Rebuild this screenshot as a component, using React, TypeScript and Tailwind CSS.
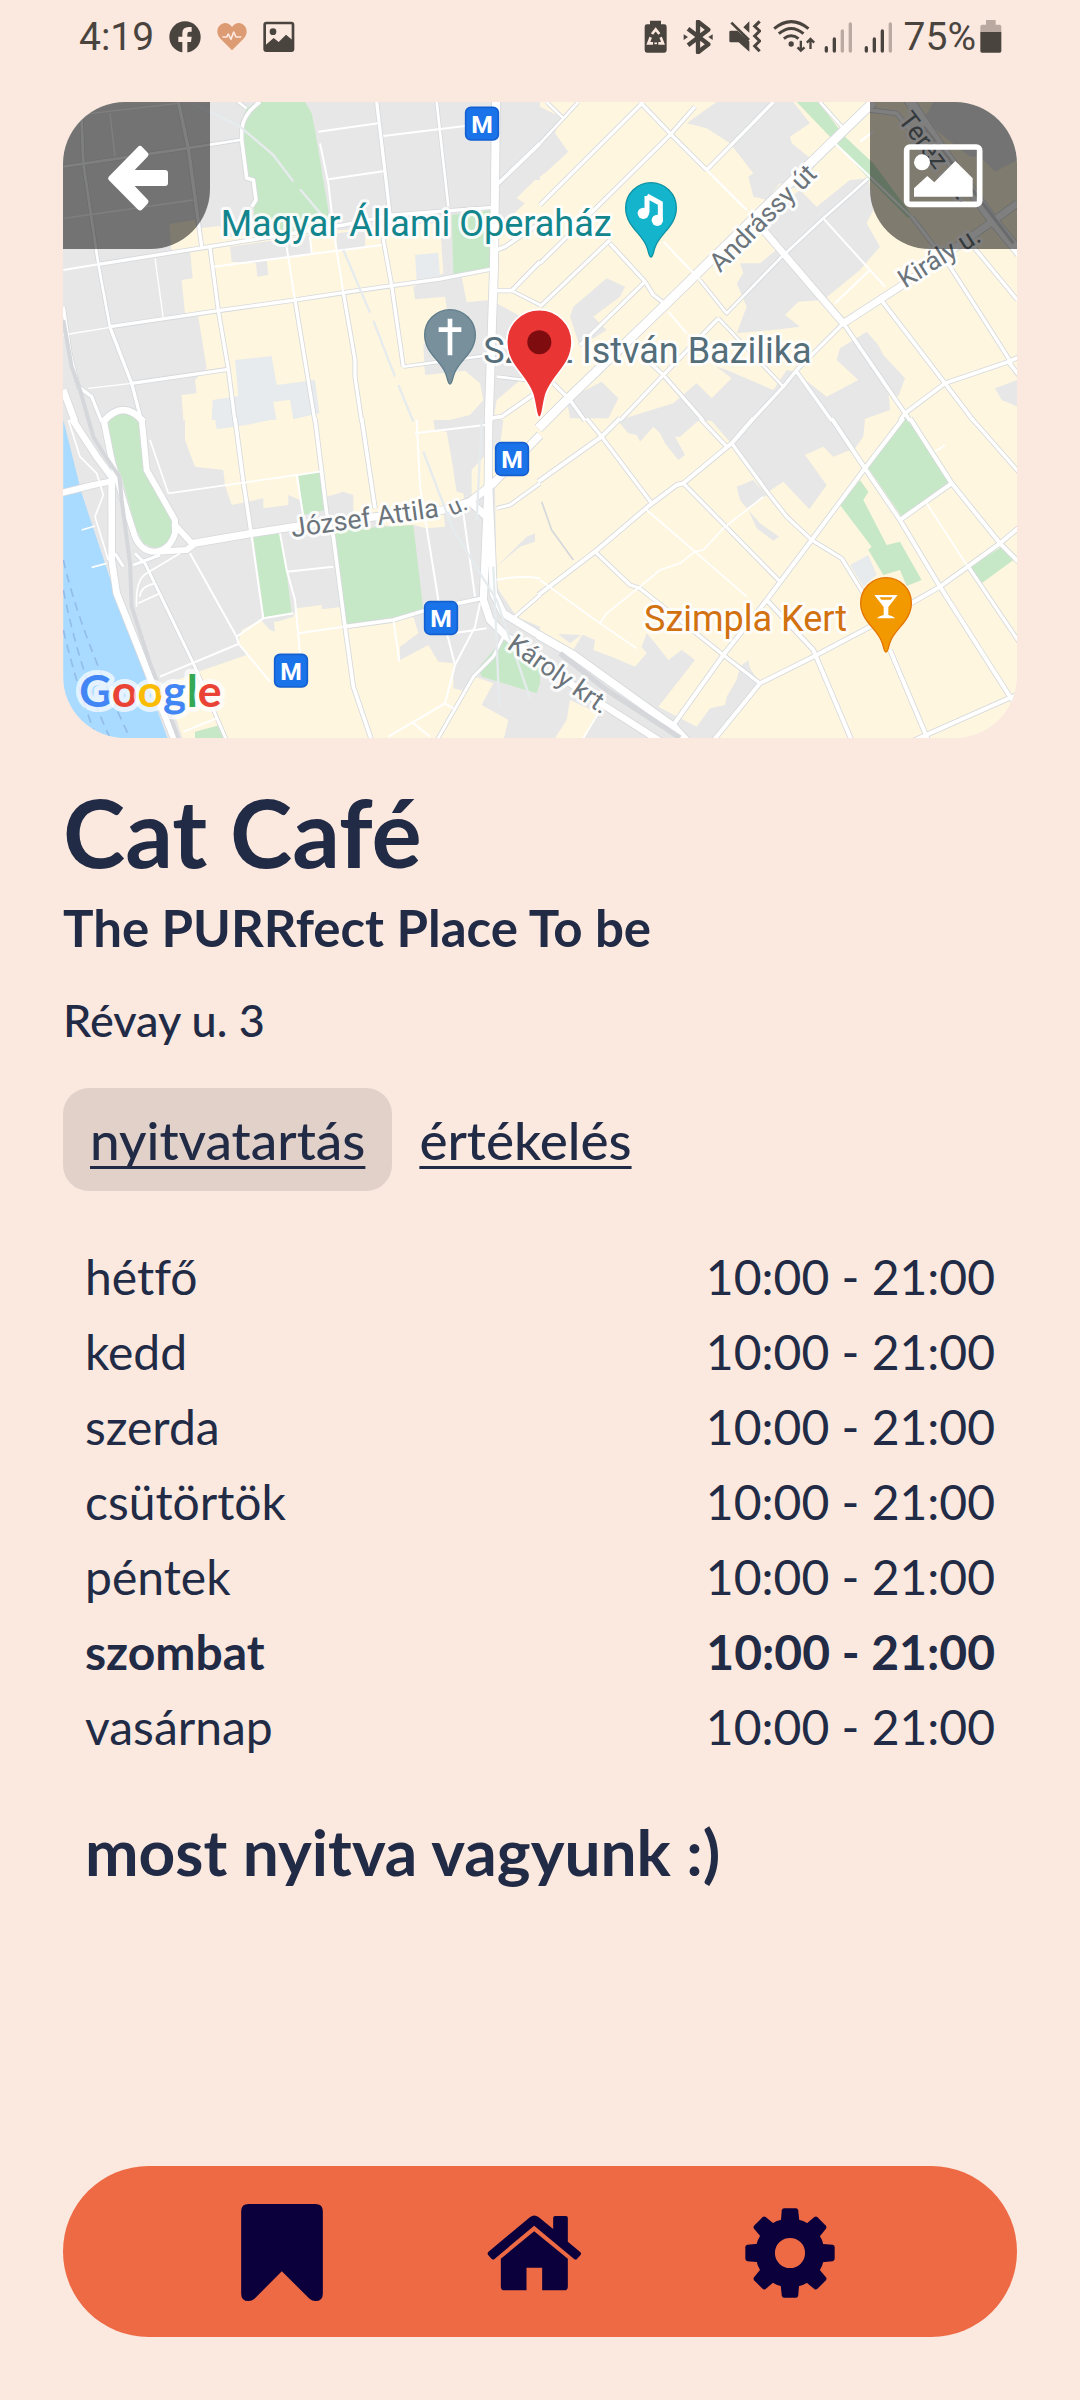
import type { ReactNode } from "react";

type Road = [width: number, d: string];

const GREY = "#e7e7e7";
const YELLOW = "#fef6df";
const GREEN = "#c7e8c7";
const PALE = "#e8ebed";

type Area = [fill: string, points: string];

type Quadrant = { x: number; y: number; areas: Area[]; roads: Road[] };

const quadrants: Quadrant[] = [
  {
    x: 0,
    y: 0,
    areas: [
      [GREY, "0,0 1440,0 1440,240 1425,240 1370,295 1395,310 1320,380 1310,450 1310,610 1440,680 1440,790 1310,900 1300,962 0,962"],
      [YELLOW, "328,372 405,360 415,385 480,378 490,410 850,390 960,380 1115,370 1140,370 1150,520 1060,560 1065,598 1155,590 1165,655 1090,735 1095,825 1215,812 1260,850 1270,900 1230,945 1160,962 370,962 365,885 410,880 405,840 440,805 415,650 375,640 365,540 398,535 390,450 335,455"],
      [GREY, "510,440 750,405 755,460 620,480 625,525 592,530 588,490 515,485"],
      [GREY, "830,400 915,390 915,440 830,455"],
      [YELLOW, "1205,530 1290,515 1290,600 1220,607"],
      [PALE, "1065,465 1135,458 1140,530 1070,540"],
      [PALE, "525,780 635,768 650,855 765,840 778,940 700,958 690,900 640,905 650,962 455,962 458,900 535,888"],
      [GREEN, "545,60 560,25 590,6 735,6 755,40 765,90 805,330 810,400 690,405 590,390 580,320 588,300 580,240 560,235 545,120"],
      [GREEN, "1175,345 1295,330 1290,505 1180,522"],
      [GREEN, "145,962 165,942 195,938 225,950 235,962"],
    ],
    roads: [
      [4, "M10,50 L355,10 M150,40 L165,170 M10,355 L400,300 M285,475 L310,655 M10,705 L150,682 M85,865 L215,850"],
      [6, "M775,95 L955,70 M970,108 L1215,78 M805,238 L975,213 M780,130 L805,250 L825,420 L850,578 M680,440 L705,600 M460,500 L965,435 M750,410 L755,460 M10,510 L115,493"],
      [8, "M65,60 L70,190 L115,493 L150,682 M10,200 L380,145 L540,120 M1130,6 L1165,320"],
      [8, "M535,6 L560,25 M1355,572 L1440,615 M1310,830 L1440,845 M1030,800 L1290,765"],
      [10, "M115,493 L430,443 L650,408 L850,375 L1000,345 L1300,322 M150,680 L475,632 L705,600 L850,578 L995,557 L1140,537 L1290,508 M215,850 L505,808"],
      [10, "M355,6 L385,145 L425,440 M450,443 L475,632 L505,808 L525,965 M150,682 L215,850 L245,965"],
      [10, "M950,6 L975,215 L990,345 L970,420 L995,557 L1030,800 M705,600 L765,965 M850,578 L885,780 L885,830 L905,965"],
      [11, "M600,6 Q550,40 545,90 L545,120 L560,235 L580,240 L588,300 L575,320"],
      [11, "M1440,130 L1310,255 M1440,370 L1335,440 L1310,450 M1440,485 L1355,572 L1310,572 M1440,870 L1325,950 L1290,955"],
      [10, "M10,620 L30,760 L55,860 L95,890 L125,965"],
      [20, "M10,870 L45,965 M130,965 Q190,895 250,965"],
      [24, "M1308,6 L1302,500 L1286,965"],
    ],
  },
  {
    x: 1440,
    y: 0,
    areas: [
      [GREY, "0,20 60,50 45,100 85,155 20,215 0,230"],
      [GREY, "440,70 530,6 760,6 810,70 750,110 755,130 830,190 780,270 720,250 680,300 640,290 625,230 640,220 570,130 500,85"],
      [GREY, "700,330 780,270 830,320 930,240 985,235 1000,330 980,370 1020,440 960,510 850,600 775,605 735,645 780,680 700,690 590,700 620,620 590,550 610,520 600,490 660,490 720,440 660,380"],
      [GREY, "980,695 1015,735 1030,765 1095,835 1075,890 1045,870 1050,930 960,962 230,962 400,910 470,850 515,895 575,835 530,800 560,810 700,870 740,810 765,815 860,890 955,840 890,780 900,745"],
      [GREY, "100,620 200,535 255,560 240,590 160,650 200,690 120,740 90,650"],
      [GREY, "185,845 235,895 205,955 90,955 80,900"],
      [GREY, "1180,6 1432,6 1432,180 1365,215 1320,170 1290,170 1150,60"],
      [GREY, "1365,865 1432,840 1432,920 1385,900"],
      [GREEN, "770,6 835,6 915,110 1000,190 1115,345 1105,355 985,235 870,110"],
    ],
    roads: [
      [6, "M500,210 L620,330 M850,355 L1035,560 M885,610 L990,510 M885,130 L1115,350 M385,635 L440,700 M960,125 L1000,95 M370,425 L480,540"],
      [8, "M20,6 L70,55 L115,6 M70,55 L0,130 M840,6 L910,85 M480,540 L560,640 L720,475 L850,355 L935,280 L985,235 M535,655 L730,860"],
      [10, "M310,6 L0,315 M465,20 L390,105 L0,490 M210,420 L0,620 M210,430 L315,545 L340,585 L380,615 M315,545 L120,735"],
      [10, "M300,6 L390,100 L500,210 M500,210 L700,6 M535,655 L370,825 L240,962 M40,850 L90,900 L135,962 M310,770 L370,825 L490,962"],
      [10, "M910,670 L770,810 L730,860 L635,962 M770,815 L875,962 M1115,350 L1230,500 L1320,640 L1415,790 M1300,440 L1432,600"],
      [11, "M1020,595 L1215,850 L1300,962 M1215,850 L1405,785 L1440,770 M1405,785 L1440,830 M1215,850 L1095,940 L1080,962 M910,670 L1095,940 L1110,962 M990,30 L1070,40 L1110,90"],
      [20, "M670,390 L910,670 L1080,560 L1350,370 L1432,310"],
      [26, "M1000,6 L800,200 L380,610 L80,900 L-5,985"],
      [28, "M1100,-10 L1200,140 L1350,350 L1440,460"],
    ],
  },
  {
    x: 0,
    y: 960,
    areas: [
      [GREY, "0,0 1330,0 1320,80 1290,90 1235,150 1235,225 1270,200 1305,200 1310,500 1370,590 1440,620 1440,962 0,962"],
      [YELLOW, "375,0 1120,0 1125,30 1160,35 1175,120 1190,215 1210,220 1215,260 1150,270 1155,320 1100,325 1060,315 990,320 880,280 880,225 850,215 800,230 720,240 685,225 685,255 610,265 610,235 515,255 495,195 490,150 405,140 375,60"],
      [YELLOW, "430,750 560,705 535,665 545,630 610,595 650,605 700,590 710,565 785,555 785,568 850,560 860,615 1060,590 1075,640 1020,680 1020,720 1105,675 1135,725 1180,730 1180,805 1220,815 1245,770 1300,790 1265,855 1345,900 1330,962 370,962 340,870 300,800"],
      [GREY, "1310,440 1400,350 1425,340 1425,365 1380,380"],
      [GREY, "600,598 640,590 645,635 630,630"],
      ["#a9daff", "10,0 25,60 65,220 165,520 325,962 10,962"],
      [GREEN, "145,-2 235,-2 250,120 345,300 340,340 320,375 285,385 250,370 225,320 185,170 160,120 145,40"],
      [GREEN, "715,168 780,155 795,270 730,285"],
      [GREEN, "580,350 660,340 680,460 695,580 612,592"],
      [GREEN, "820,330 1060,315 1090,570 1000,598 860,612"],
      [GREEN, "1330,655 1440,720 1440,790 1430,820 1265,770 1255,745"],
      [GREEN, "405,935 480,915 495,962 405,962"],
      [PALE, "465,-2 640,-2 560,15 470,28"],
    ],
    roads: [
      [5, "M325,220 L780,155 M270,60 L325,220 M25,0 L60,110 L110,160 L130,225 L105,290 L145,420 M65,330 L105,318 M95,442 L140,430 M300,520 L235,550 M240,530 Q240,500 285,490 M230,560 Q225,480 260,460 L360,400"],
      [6, "M1065,40 L1275,15 M1070,0 L1080,200 L1135,540 L1185,735 L1155,850 L985,950 M1210,280 L1245,530 M1260,550 L1245,620 L1185,735 M1180,640 L1280,625 M1055,905 L1110,950 M1155,850 L1180,865 M370,935 L470,895"],
      [6, "M710,165 L730,290 M660,340 L680,450 L705,540 L720,700 M680,455 L820,440 M390,400 L530,650 L610,595 L700,580 M575,350 L610,595 M530,650 L535,670 L630,785 M300,770 L535,672 M715,640 L850,620 M1000,600 L1018,725 M1310,480 Q1380,465 1440,475"],
      [9, "M225,400 L255,430 L400,730 L500,962 M1330,650 L1300,710 L1240,770 L1130,962 M1310,265 L1350,255 L1440,190 M1365,590 L1440,525 M220,435 L300,405 M165,400 L190,440"],
      [11, "M525,-5 L550,185 L575,350 M765,-5 L800,280 L820,350 L855,620 L880,800 L935,962 M905,-5 L945,265 M855,620 L1000,600 L1100,570 L1265,535"],
      [18, "M130,-5 L155,120 L190,240 L225,350 Q245,395 285,395 Q330,390 345,340 L345,300 L260,150 L245,-5"],
      [18, "M0,220 L100,195 L150,185 M340,310 L400,375 L380,390 L290,395"],
      [20, "M35,-5 L110,110 L155,170 L155,420 L170,520 L345,962"],
      [22, "M400,370 L575,340 L800,305 L1150,270 L1230,245 L1300,190 L1440,45 M1230,245 L1280,290"],
      [22, "M1286,-5 L1285,180 L1275,420 L1270,540 L1290,600 L1340,650 L1445,722 M1285,180 L1295,400 L1300,520 L1330,580 L1445,650"],
    ],
  },
  {
    x: 1440,
    y: 960,
    areas: [
      [GREY, "0,640 130,645 165,660 160,690 215,710 285,740 320,700 305,680 320,640 350,675 385,720 425,690 465,720 355,860 470,920 510,865 555,855 560,830 590,780 600,740 625,720 630,745 660,790 520,962 0,962"],
      [YELLOW, "0,600 90,670 130,640 100,690 0,630"],
      [YELLOW, "90,840 175,880 130,962 40,962 80,900"],
      [GREY, "230,-2 480,-2 420,50 405,50 435,105 415,120 375,70 360,40 340,20 300,65 290,45 265,40"],
      [GREY, "510,-2 975,-2 970,50 945,85 880,110 850,80 795,105 860,195 808,268 730,185 685,215 600,100"],
      [GREY, "590,200 640,180 680,225 620,265 600,240"],
      [GREY, "625,270 660,310 718,350 700,362 650,325"],
      [PALE, "930,435 985,405 1010,465 970,500"],
      [GREEN, "1095,-5 985,145 1085,290 1235,190 1105,-5"],
      [GREEN, "960,180 985,215 970,240 1040,375 1080,365 1145,480 1100,498 1080,450 1030,465 985,390 995,380 900,255"],
      [GREEN, "1290,440 1385,380 1420,420 1325,490"],
    ],
    roads: [
      [5, "M320,270 L465,395 L620,530 M550,325 L670,230 M550,325 L490,390 L465,395 L420,430 L360,450 L300,500 L200,580 L180,610 M0,480 L180,610 L290,685 M1185,95 L1215,75 M1160,250 L1290,450 M175,880 L125,962"],
      [10, "M140,-5 L185,50 L335,250 M165,395 L270,495 L300,505 L550,705 L660,790 M430,190 L720,485 M480,-5 L560,80 M575,70 L685,220 L740,290 L815,360 L905,415 L970,520 M1295,-5 L1440,160 M1285,440 L1440,670"],
      [12, "M-5,185 L185,50 L240,-5 M-5,525 L165,395 L330,255 L410,195 L430,190 L575,70 L640,-5 M1090,-5 L975,145 L815,360 L680,540 L550,705 L400,915"],
      [12, "M875,-5 L975,145 L1080,300 L1200,500 L1410,830 L1440,870 M1110,-5 L1235,190 L1380,370 L1440,430 M1080,300 L1235,190 M1440,320 L1380,370 L1200,500 L1000,615 L820,710 L660,790 L520,962"],
      [12, "M680,540 L820,690 L935,962 M1050,690 L1165,962 M1120,962 L1440,820"],
      [20, "M60,770 L190,855 L370,970"],
      [24, "M-5,645 L100,705 L400,920 L450,975"],
    ],
  },
];

function Pin({ x, y, fill, edge, children }: { x: number; y: number; fill: string; edge: string; children: ReactNode }) {
  return (
    <g transform={`translate(${x} ${y})`}>
      <path d="M0,147 C-7,147 -7,128 -14,113 C-30,75 -76,52 -76,0 A76,76 0 0 1 76,0 C76,52 30,75 14,113 C7,128 7,147 0,147Z" fill={fill} stroke={edge} strokeWidth={4} />
      {children}
    </g>
  );
}

function Metro({ x, y }: { x: number; y: number }) {
  return (
    <g transform={`translate(${x} ${y})`}>
      <rect x={2} y={2} width={98} height={98} rx={16} fill="#1a73e8" stroke="#1560d0" strokeWidth={5} />
      <text x={51} y={78} textAnchor="middle" fontSize={74} fontWeight={700} fill="#fff">M</text>
    </g>
  );
}

type LabelProps = { x: number; y: number; size: number; fill: string; rotate?: number; children: ReactNode };

function Label({ x, y, size, fill, rotate = 0, children }: LabelProps) {
  return (
    <text
      transform={`translate(${x} ${y}) rotate(${rotate})`}
      fontSize={size}
      fill={fill}
      stroke="#fff"
      strokeOpacity={0.85}
      strokeWidth={18}
      strokeLinejoin="round"
      paintOrder="stroke"
    >
      {children}
    </text>
  );
}

function CityMap() {
  return (
    <svg
      viewBox="9 6 2862 1908"
      preserveAspectRatio="xMidYMid slice"
      className="block aspect-[954/636] w-full font-['Roboto',sans-serif]"
      role="img"
      aria-label="Térkép"
    >
      <rect x={0} y={0} width={2880} height={1920} fill={YELLOW} />
      {quadrants.map((q) => (
        <g key={`${q.x}-${q.y}`} transform={`translate(${q.x} ${q.y})`}>
          {q.areas.map(([fill, points]) => (
            <polygon key={points} points={points} fill={fill} />
          ))}
        </g>
      ))}
      <g fill="none" stroke="#93bde8" strokeWidth={5} strokeDasharray="26 18">
        <path d="M10,1380 Q60,1600 210,1914" />
        <path d="M10,1470 Q60,1720 150,1914" />
        <path d="M10,1590 Q50,1760 110,1914" />
      </g>
      <g fill="none" strokeLinejoin="round">
        {quadrants.map((q) => (
          <g key={`${q.x}-${q.y}`} transform={`translate(${q.x} ${q.y})`} stroke="#d6d9dc">
            {q.roads.filter(([w]) => w > 6).map(([w, d]) => (
              <path key={d} d={d} strokeWidth={w + 5} />
            ))}
          </g>
        ))}
        {quadrants.map((q) => (
          <g key={`${q.x}-${q.y}`} transform={`translate(${q.x} ${q.y})`} stroke="#fff">
            {q.roads.map(([w, d]) => (
              <path key={d} d={d} strokeWidth={w} />
            ))}
          </g>
        ))}
        <g stroke="#d5d7db">
          <path d="M10,660 L35,800 L60,870 L100,1010 L130,1060 L178,1130 L185,1200 L210,1390 L215,1520 L270,1690 L355,1914" strokeWidth={12} />
          <path d="M1500,1660 L1640,1770 L1810,1880 L1860,1914" strokeWidth={16} />
          <path d="M2590,80 L2700,220 L2860,430" strokeWidth={10} />
          <path d="M1445,1205 L1475,1290 L1540,1380" strokeWidth={5} />
        </g>
        <g stroke="#e6ebee" strokeWidth={7}>
          <path d="M390,6 L540,80 L640,165 L700,245 M720,268 L790,350 M850,450 L930,638 M940,662 L1005,830 M1015,855 L1060,965 M1090,1055 L1180,1290 L1310,1500 L1410,1795" />
          <path d="M1265,960 L1250,1260 M1300,1400 L1318,1820" />
        </g>
      </g>

      <Label x={482} y={408} size={108} fill="#12858d">Magyar Állami Operaház</Label>
      <Label x={1270} y={788} size={108} fill="#546e7a">Szent István Bazilika</Label>
      <Label x={1752} y={1592} size={108} fill="#d2710f">Szimpla Kert</Label>
      <Label x={1980} y={520} size={79} rotate={-45} fill="#6b747b">Andrássy út</Label>
      <Label x={2535} y={566} size={78} rotate={-32} fill="#6b747b">Király u.</Label>
      <Label x={2512} y={60} size={78} rotate={53} fill="#6b747b">Teréz krt.</Label>
      <Label x={697} y={1312} size={80} rotate={-8} fill="#6b747b">József Attila</Label>
      <Label x={1176} y={1248} size={68} rotate={-24} fill="#6b747b">u.</Label>
      <Label x={1338} y={1643} size={78} rotate={35} fill="#6b747b">Károly krt.</Label>

      <Metro x={1215} y={20} />
      <Metro x={1305} y={1026} />
      <Metro x={1092} y={1503} />
      <Metro x={642} y={1661} />

      <Pin x={1170} y={705} fill="#78909c" edge="#607d8b">
        <path d="M-7,-49 H7 V-23 H34 V-9 H7 V61 H-7 V-9 H-34 V-23 H-7Z" fill="#fff" />
      </Pin>
      <Pin x={1773} y={324} fill="#14b4cd" edge="#0e93a5">
        <path d="M-12,-36 L28,-14 V36" fill="none" stroke="#fff" strokeWidth={15} />
        <path d="M-12,-36 V14" fill="none" stroke="#fff" strokeWidth={15} />
        <circle cx={-23} cy={16} r={17} fill="#fff" />
        <circle cx={19} cy={37} r={17} fill="#fff" />
      </Pin>
      <Pin x={2478} y={1509} fill="#f29900" edge="#e37400">
        <path d="M-35,-24 H35 L7,12 V36 Q20,38 28,46 H-28 Q-20,38 -7,36 V12Z" fill="#fff" />
        <path d="M-20,-17 H20 L14,-10 H-14Z" fill="#f29900" />
      </Pin>
      <path
        d="M1438,952 C1427,952 1430,924 1418,882 C1396,822 1340,795 1340,726 A98,97 0 0 1 1536,726 C1536,795 1480,822 1458,882 C1446,924 1449,952 1438,952Z"
        fill="#ea3535"
        stroke="#fff"
        strokeWidth={5}
      />
      <circle cx={1438} cy={727} r={36} fill="#7f0d0f" />

      <text x={58} y={1821} fontSize={134} fontWeight={700} className="font-['Lato',sans-serif]" stroke="#fff" strokeOpacity={0.7} strokeWidth={30} strokeLinejoin="round" paintOrder="stroke">
        <tspan fill="#4285f4">G</tspan>
        <tspan fill="#ea4335">o</tspan>
        <tspan fill="#fbbc05">o</tspan>
        <tspan fill="#4285f4">g</tspan>
        <tspan fill="#34a853">l</tspan>
        <tspan fill="#ea4335">e</tspan>
      </text>
    </svg>
  );
}

const signals = [
  { id: "sim1", bars: 2, className: "-ml-1 h-[34px] w-[28px]" },
  { id: "sim2", bars: 3, className: "h-[34px] w-[28px]" },
];

function StatusBar() {
  return (
    <header className="flex h-[54px] items-center justify-between pt-5 pr-[15px] pl-4 font-['Roboto',sans-serif] text-[39px] leading-[34px] text-[#4a443f]">
      <div className="flex items-center gap-[15px]">
        <time>4:19</time>
        <svg viewBox="326 64 96 96" className="size-8">
          <circle cx={374} cy={112} r={47} fill="currentColor" />
          <path d="M366,160 V127 H354 V111 H366 V100 Q366,82 386,82 H394 V96 H388 Q381,96 381,103 V111 H394 L392,127 H381 V160Z" fill="#fbe8df" />
        </svg>
        <svg viewBox="469 64 94 96" className="size-8">
          <path d="M516,152 L480,116 C455,85 495,52 516,82 C537,52 577,85 552,116Z" fill="#dd9b74" />
          <path d="M489,112 H500 L505,103 L513,119 L521,97 L528,112 H542" fill="none" stroke="#fbe8df" strokeWidth={5} strokeLinejoin="round" strokeLinecap="round" />
        </svg>
        <svg viewBox="608 64 96 96" className="size-8">
          <rect x={613} y={70} width={85} height={83} rx={5} fill="none" stroke="currentColor" strokeWidth={8} />
          <circle cx={638} cy={96} r={10} fill="currentColor" />
          <path d="M615,137 L640,115 L655,127 L677,105 L697,122 V152 H615Z" fill="currentColor" />
        </svg>
      </div>
      <div className="flex items-center gap-3">
        <svg viewBox="129 60 69 102" className="mr-1 h-[34px] w-[23px]">
          <path d="M147,62 H180 V73 H190 Q197,73 197,80 V151 Q197,158 190,158 H138 Q131,158 131,151 V80 Q131,73 138,73 H147Z" fill="currentColor" />
          <path d="M153,102 L164,88 L175,102 M149,112 L142,130 H156 M179,112 L186,130 H172" fill="none" stroke="#fbe8df" strokeWidth={8} />
          <path d="M160,130 H168" fill="none" stroke="#fbe8df" strokeWidth={5} />
        </svg>
        <svg viewBox="253 58 90 102" className="mr-1 h-[34px] w-[30px]">
          <path d="M268,84 L329,131 L298,155 V63 L329,87 L268,134" fill="none" stroke="currentColor" strokeWidth={13} strokeLinejoin="round" />
          <path d="M255,101 L268,109 L255,118Z M342,101 L329,109 L342,118Z" fill="currentColor" />
        </svg>
        <svg viewBox="386 60 96 102" className="h-[34px] w-8">
          <path d="M387,96 Q387,92 391,92 H411 L447,124 V155 L415,127 H391 Q387,127 387,123Z M447,64 V98 L429,82Z" fill="currentColor" />
          <path d="M393,68 L446,120" stroke="currentColor" strokeWidth={8} />
          <path d="M478,64 L463,79 L478,93 L463,108 L478,123 L463,138 L478,154" fill="none" stroke="currentColor" strokeWidth={9} />
        </svg>
        <svg viewBox="517 60 128 102" className="h-[34px] w-[43px]">
          <g fill="none" stroke="currentColor" strokeWidth={9}>
            <path d="M520,86 Q571,44 623,86 M534,101 Q571,70 608,101 M549,116 Q571,99 593,116" />
            <path d="M600,122 V152 M590,142 L600,152 L611,142 M629,147 V118 M618,128 L629,117 L640,128" strokeWidth={7} />
          </g>
          <circle cx={571} cy={132} r={8} fill="currentColor" />
        </svg>
        {signals.map((s) => (
          <svg key={s.id} viewBox="667 60 84 102" className={s.className}>
            {[138, 112, 88, 67].map((top, i) => (
              <rect key={top} x={669 + i * 24} y={top} width={10} height={158 - top} rx={5} fill={i < s.bars ? "#4a443f" : "#baa9a0"} />
            ))}
          </svg>
        ))}
        <span className="flex items-center gap-1">
          75%
          <svg viewBox="1142 60 66 102" className="h-[34px] w-[22px]">
            <path d="M1160,60 H1189 V74 H1200 Q1206,74 1206,80 V97 H1143 V80 Q1143,74 1149,74 H1160Z" fill="#baa9a0" />
            <path d="M1143,96 H1206 V153 Q1206,158 1201,158 H1148 Q1143,158 1143,153Z" fill="currentColor" />
          </svg>
        </span>
      </div>
    </header>
  );
}

const hours = [
  { day: "hétfő", time: "10:00 - 21:00" },
  { day: "kedd", time: "10:00 - 21:00" },
  { day: "szerda", time: "10:00 - 21:00" },
  { day: "csütörtök", time: "10:00 - 21:00" },
  { day: "péntek", time: "10:00 - 21:00" },
  { day: "szombat", time: "10:00 - 21:00", today: true },
  { day: "vasárnap", time: "10:00 - 21:00" },
];

export default function App() {
  return (
    <div className="flex min-h-screen flex-col bg-[#fbe8df] px-[63px] pb-[63px] font-['Lato',sans-serif] text-[#212b46] [font-variant-ligatures:none]">
      <StatusBar />

      <section className="relative mt-12 overflow-hidden rounded-[62px]">
        <CityMap />
        <button type="button" aria-label="Vissza" className="absolute top-0 left-0 size-[147px] rounded-br-[60px] bg-black/50">
          <svg viewBox="9 6 441 441" className="size-full">
            <path d="M154,235 L240,147 L256,164 L203,219 H315 V249 H203 L256,305 L240,322Z" fill="#fff" stroke="#fff" strokeWidth={18} strokeLinejoin="round" />
          </svg>
        </button>
        <button type="button" aria-label="Képek" className="absolute top-0 right-0 size-[147px] rounded-bl-[60px] bg-black/50">
          <svg viewBox="991 6 441 441" className="size-full">
            <rect x={1101} y={141} width={219} height={172} rx={10} fill="none" stroke="#fff" strokeWidth={17} />
            <circle cx={1147} cy={187} r={24} fill="#fff" />
            <path d="M1123,290 V265 L1163,228 L1184,247 L1247,183 L1299,235 V290Z" fill="#fff" />
          </svg>
        </button>
      </section>

      <main>
        <h1 className="mt-11 text-[94px] leading-[100px] font-bold">Cat Café</h1>
        <h2 className="mt-4 text-[51px] leading-[60px] font-bold">The PURRfect Place To be</h2>
        <p className="mt-8 text-[45px] leading-[60px] font-medium">Révay u. 3</p>

        <div role="tablist" className="mt-[38px] flex text-[53px] leading-[103px] font-medium">
          <button type="button" role="tab" aria-selected="true" className="rounded-[26px] bg-[#e2d1c9] px-[27px] underline decoration-[3px] underline-offset-[6px] [text-decoration-skip-ink:none]">
            nyitvatartás
          </button>
          <button type="button" role="tab" aria-selected="false" className="px-[27px] underline decoration-[3px] underline-offset-[6px] [text-decoration-skip-ink:none]">
            értékelés
          </button>
        </div>

        <div className="px-[22px]">
          <table className="mt-12 w-full text-[48px] leading-[75px]">
            <tbody>
              {hours.map((h) => (
                <tr key={h.day} className={h.today ? "font-bold" : "font-normal"}>
                  <th scope="row" className={h.today ? "p-0 text-left font-bold" : "p-0 text-left font-normal"}>{h.day}</th>
                  <td className="p-0 text-right">{h.time}</td>
                </tr>
              ))}
            </tbody>
          </table>
          <p className="mt-12 text-[64px] leading-[80px] font-bold">most nyitva vagyunk :)</p>
        </div>
      </main>

      <nav className="mt-auto flex h-[171px] items-center justify-between rounded-full bg-[#ee6a45] pt-0.5 pr-[182px] pl-[178px] text-[#0b003b]">
        <a href="#saved" aria-label="Mentett helyek">
          <svg viewBox="33 42 245 291" className="h-[97px] w-[82px]" fill="currentColor">
            <path d="M55,42 H256 Q278,42 278,64 V311 Q278,333 256,333 Q246,333 238,326 L155,244 L73,326 Q65,333 55,333 Q33,333 33,311 V64 Q33,42 55,42Z" />
          </svg>
        </a>
        <a href="#home" aria-label="Kezdőlap">
          <svg viewBox="767 77 284 228" className="h-[76px] w-[95px]" fill="currentColor">
            <path d="M908,126 L1009,208 V292 Q1009,303 998,303 H932 V235 H885 V303 H819 Q808,303 808,292 V208Z" />
            <path d="M896,83 Q908,74 921,83 L965,119 V86 Q965,80 971,80 H1003 Q1009,80 1009,86 V157 L1046,188 Q1051,192 1047,197 L1037,208 Q1032,213 1027,208 L908,109 L790,208 Q785,213 780,208 L770,197 Q766,192 771,187Z" />
          </svg>
        </a>
        <a href="#settings" aria-label="Beállítások">
          <svg viewBox="47 56 269 269" className="size-[90px]">
            <g fill="currentColor">
              {[0, 45, 90, 135, 180, 225, 270, 315].map((a) => (
                <path key={a} transform={`rotate(${a} 181.5 190.5)`} d="M153,110 L157,63 Q158,57 164,57 H199 Q205,57 206,63 L211,110Z" />
              ))}
            </g>
            <circle cx={181.5} cy={190.5} r={74} fill="none" stroke="currentColor" strokeWidth={58} />
          </svg>
        </a>
      </nav>
    </div>
  );
}
